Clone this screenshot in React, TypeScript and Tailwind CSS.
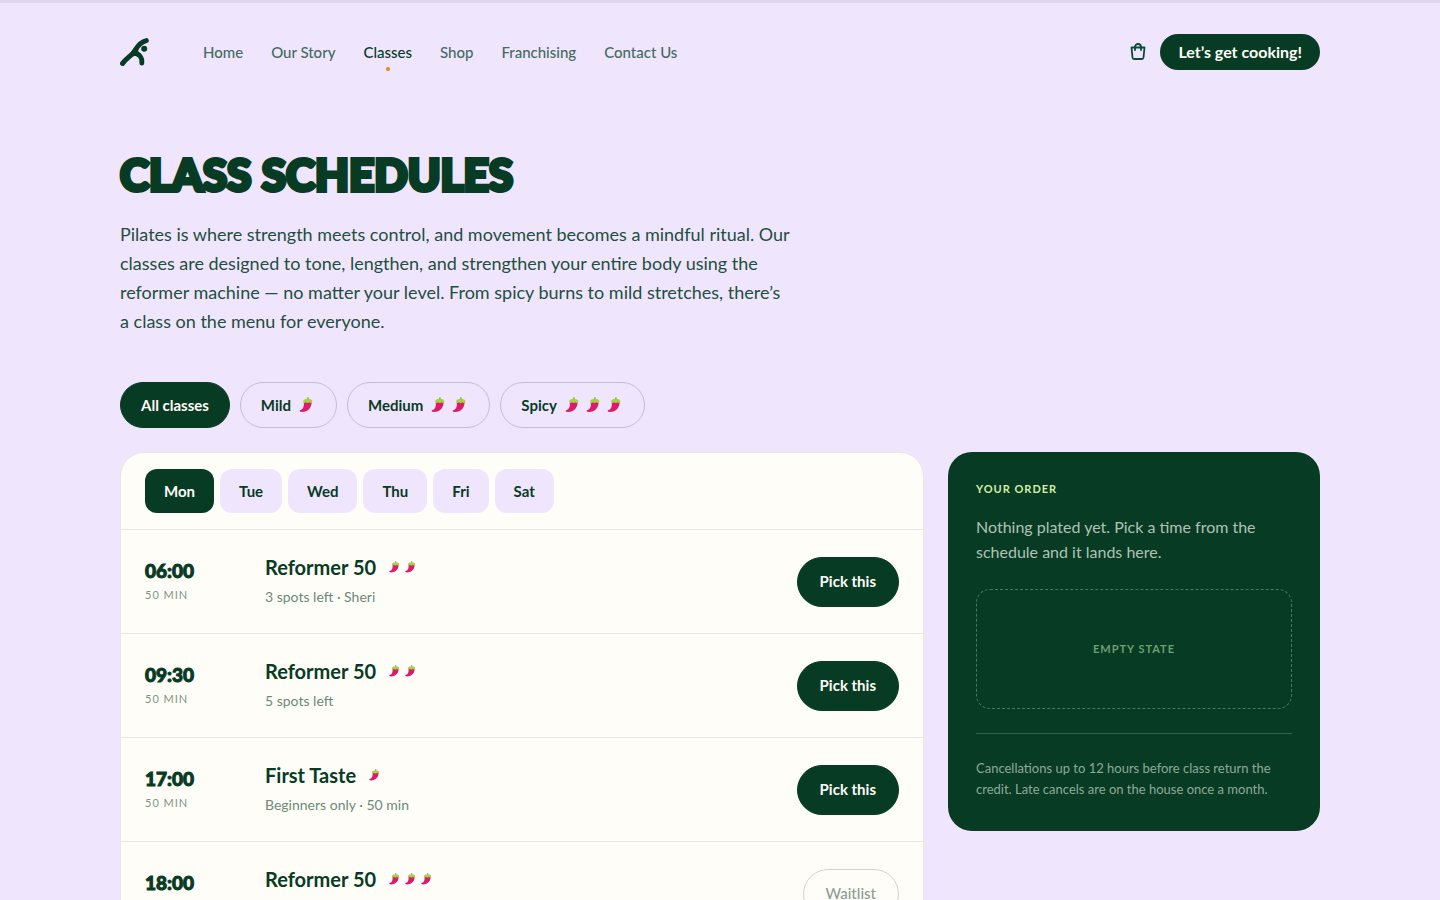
import { useState } from 'react';
import clsx from 'clsx';

type ClassSlot = {
    id: number;
    time: string;
    duration: string;
    name: string;
    heat: number;
    note: string;
    full?: boolean;
};

const links = ['Home', 'Our Story', 'Classes', 'Shop', 'Franchising', 'Contact Us'];
const days = ['Mon', 'Tue', 'Wed', 'Thu', 'Fri', 'Sat'];

const filters = [
    { label: 'All classes', heat: 0 },
    { label: 'Mild', heat: 1 },
    { label: 'Medium', heat: 2 },
    { label: 'Spicy', heat: 3 },
];

const slots: ClassSlot[] = [
    { id: 1, time: '06:00', duration: '50 min', name: 'Reformer 50', heat: 2, note: '3 spots left · Sheri' },
    { id: 2, time: '09:30', duration: '50 min', name: 'Reformer 50', heat: 2, note: '5 spots left' },
    { id: 3, time: '17:00', duration: '50 min', name: 'First Taste', heat: 1, note: 'Beginners only · 50 min' },
    { id: 4, time: '18:00', duration: '50 min', name: 'Reformer 50', heat: 3, note: 'Class full', full: true },
];

function Logo() {
    return (
        <svg viewBox="0 0 30 28" className="h-7 w-[30px]" fill="none" aria-hidden="true">
            <path d="M2.500 25.500C5.500 21 10.500 18.500 14 14C17 10 18.500 4.500 26.300 2.600" stroke="#073b24" strokeWidth="5" strokeLinecap="round" />
            <path d="M13.500 15C19 15.500 22.500 19 21.800 25.200" stroke="#073b24" strokeWidth="4.8" strokeLinecap="round" />
            <path d="M9 17L18 8.500L18.500 16L13 18.500z" fill="#073b24" />
            <circle cx="24.200" cy="10.800" r="3" fill="#073b24" />
        </svg>
    );
}

function Chilli({ className }: { className: string }) {
    return (
        <svg viewBox="0 0 18 18" className={className} aria-hidden="true">
            <path d="M5.800 6h7.700c.5 5-3.300 10-9.500 10-2.600 0-3-1.400-1.800-1.800C5.200 13.300 6.400 10.500 5.800 6z" fill="#dd1a6c" />
            <path d="M5.200 6.200c-.5-2.200 1.300-3.400 4.600-3.400s5 1.200 4.500 3.400c-1 .9-1.900.9-2.600.1-1.100 1-2.700 1-3.800 0-.8.800-1.800.8-2.700-.1z" fill="#a5d244" />
            <path d="M9.200 1.200h1.400v2H9.200z" fill="#86b032" />
        </svg>
    );
}

function Heat({ count, className }: { count: number; className: string }) {
    return (
        <>
            {Array.from({ length: count }, (_, i) => (
                <Chilli key={i} className={className} />
            ))}
        </>
    );
}

export default function App() {
    const [day, setDay] = useState('Mon');
    const [filter, setFilter] = useState(0);

    return (
        <div className="min-h-screen bg-[#efe6fd] font-['Lato',sans-serif] text-[#073b24]">
            <div className="h-[3px] bg-[#dfd7ec]" />
            <header className="mx-auto flex h-[98px] max-w-[1200px] items-center">
                <a href="#home" aria-label="Homepage">
                    <Logo />
                </a>
                <nav className="ml-[53px] flex gap-7 text-[15px] leading-6">
                    {links.map(link => (
                        <a
                            key={link}
                            href="#"
                            className={clsx('relative font-medium', link !== 'Classes' && 'text-[#456b60]')}
                        >
                            {link}
                            {link === 'Classes' && (
                                <span className="absolute top-[27px] left-1/2 size-1 -translate-x-1/2 rounded-full bg-[#f08616]" />
                            )}
                        </a>
                    ))}
                </nav>
                <button aria-label="Bag" className="ml-auto p-1">
                    <svg viewBox="0 0 16 18" className="h-[18px] w-4" fill="none" stroke="#0c4a38" strokeWidth="1.8" strokeLinejoin="round" aria-hidden="true">
                        <path d="M1.500 4.500h13l-1 10q-.2 1.500-1.600 1.500H4.100q-1.400 0-1.600-1.500z" />
                        <path d="M5 7V4a3 3 0 0 1 6 0v3" strokeLinecap="round" />
                    </svg>
                </button>
                <button className="ml-2.5 h-9 rounded-full bg-[#073b24] px-[18px] text-base font-bold text-[#fffdf8]">
                    Let’s get cooking!
                </button>
            </header>

            <main className="mx-auto max-w-[1200px] pt-[43px] pb-16">
                <h1 className="text-[44px] leading-[60px] font-black uppercase [-webkit-text-stroke:4px_#073b24]">
                    Class schedules
                </h1>
                <p className="mt-4 max-w-[690px] text-lg leading-[29px] text-[#1f4f3e]">
                    Pilates is where strength meets control, and movement becomes a mindful ritual. Our
                    classes are designed to tone, lengthen, and strengthen your entire body using the
                    reformer machine — no matter your level. From spicy burns to mild stretches, there’s
                    a&nbsp;class on the menu for everyone.
                </p>

                <div className="mt-[46px] flex gap-2.5">
                    {filters.map(f => (
                        <button
                            key={f.label}
                            onClick={() => setFilter(f.heat)}
                            className={clsx(
                                'flex h-[46px] items-center gap-[3px] rounded-full border px-5 text-[15px] font-bold',
                                filter === f.heat ? 'border-[#073b24] bg-[#073b24] text-[#fffdf8]' : 'border-[#c5bcd9]'
                            )}
                        >
                            <span className={clsx(f.heat > 0 && 'mr-1')}>{f.label}</span>
                            <Heat count={f.heat} className="size-[18px]" />
                        </button>
                    ))}
                </div>

                <div className="mt-6 grid grid-cols-[1fr_372px] items-start gap-6">
                    <section className="rounded-3xl border border-[#ebe6e4] bg-[#fffdf8]">
                        <div className="flex gap-1.5 px-6 py-4">
                            {days.map(d => (
                                <button
                                    key={d}
                                    onClick={() => setDay(d)}
                                    className={clsx(
                                        'h-11 rounded-xl px-[19px] text-[15px] font-bold',
                                        day === d ? 'bg-[#073b24] text-[#fffdf8]' : 'bg-[#efe6fd]'
                                    )}
                                >
                                    {d}
                                </button>
                            ))}
                        </div>
                        {slots.map(slot => (
                            <div key={slot.id} className="flex items-center border-t border-[#e8e8e0] px-6 py-[26px]">
                                <div className="w-[120px] pb-0.5">
                                    <p className="text-[19px] leading-6 font-black [-webkit-text-stroke:1px_#073b24]">{slot.time}</p>
                                    <p className="mt-1 text-[11px] leading-4 tracking-[1px] text-[#7c9586] uppercase">{slot.duration}</p>
                                </div>
                                <div>
                                    <h2 className="flex items-center gap-0.5 text-xl leading-[22px] font-bold">
                                        <span className="mr-2.5">{slot.name}</span>
                                        <Heat count={slot.heat} className="size-3.5" />
                                    </h2>
                                    <p className="mt-[9px] text-sm leading-5 text-[#6b8a79]">{slot.note}</p>
                                </div>
                                <button
                                    className={clsx(
                                        'ml-auto h-[50px] rounded-full border px-[22px] text-[15px]',
                                        slot.full ? 'border-[#cdd6cc] font-medium text-[#87a092]' : 'border-[#073b24] bg-[#073b24] font-bold text-[#fffdf8]'
                                    )}
                                >
                                    {slot.full ? 'Waitlist' : 'Pick this'}
                                </button>
                            </div>
                        ))}
                    </section>

                    <aside className="rounded-3xl bg-[#073b24] px-7 pt-7 pb-[31px]">
                        <h2 className="text-[11px] leading-[18px] font-bold tracking-[1px] text-[#d3efa4] uppercase">Your order</h2>
                        <p className="mt-4 text-base leading-[25px] text-[#b0c2b5]">
                            Nothing plated yet. Pick a time from the schedule and it lands here.
                        </p>
                        <div className="mt-[25px] flex h-[120px] items-center justify-center rounded-[14px] border border-dashed border-[#477a5c] text-[11px] font-bold tracking-[1px] text-[#6f9f6f] uppercase">
                            Empty state
                        </div>
                        <p className="mt-6 border-t border-[#2f6647] pt-6 text-[13px] leading-[21px] text-[#8fa999]">
                            Cancellations up to 12 hours before class return the credit. Late cancels are on the house once a month.
                        </p>
                    </aside>
                </div>
            </main>
        </div>
    );
}
